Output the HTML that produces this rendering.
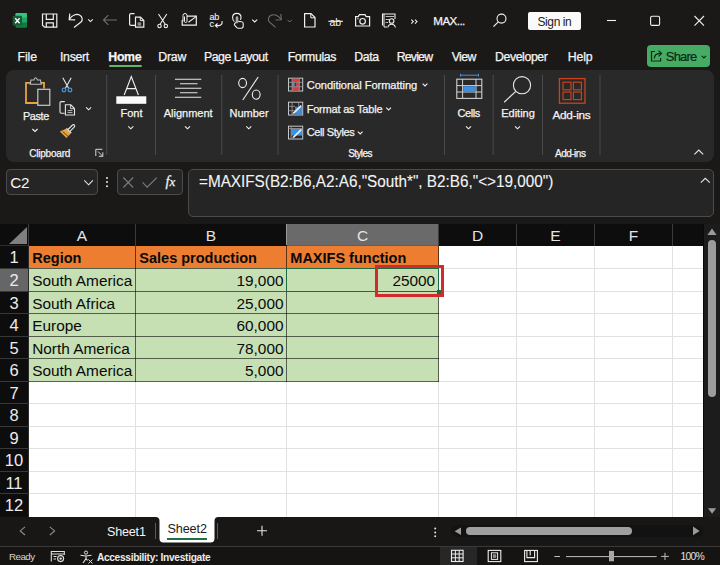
<!DOCTYPE html>
<html><head><meta charset="utf-8">
<style>
*{margin:0;padding:0;box-sizing:border-box}
html,body{width:720px;height:565px;overflow:hidden;background:#1b1917;font-family:"Liberation Sans",sans-serif}
#root{position:relative;width:720px;height:565px;overflow:hidden}
.a{position:absolute}
.t{position:absolute;white-space:nowrap;line-height:1}
svg{position:absolute;overflow:visible}
.w{color:#f4f4f4;-webkit-text-stroke:0.25px #f4f4f4}
</style></head><body><div id="root">
<!-- title -->
<!-- excel logo -->
<svg style="left:0;top:0" width="720" height="40">
 <g>
  <rect x="15.5" y="13" width="11.5" height="14.8" rx="1.2" fill="#107c41"/>
  <rect x="15.5" y="13" width="11.5" height="5" rx="1.2" fill="#33c481"/>
  <rect x="15.5" y="17.5" width="11.5" height="5" fill="#21a366"/>
  <rect x="12.7" y="15.8" width="9.3" height="9.7" rx="1" fill="#185c37"/>
  <path d="M15.2 18.2 L19.6 23.2 M19.6 18.2 L15.2 23.2" stroke="#fff" stroke-width="1.3"/>
 </g>
 <!-- save -->
 <path d="M42.5 14 H56.8 V27.2 H44.5 L42.5 25.2 Z" fill="none" stroke="#f0f0f0" stroke-width="1.2"/>
 <path d="M46.3 14 V19.3 H53.3 V14" fill="none" stroke="#f0f0f0" stroke-width="1.2"/>
 <path d="M46.3 27.2 V22.8 H53.3 V27.2" fill="none" stroke="#f0f0f0" stroke-width="1.2"/>
 <!-- undo -->
 <path d="M69.8 13.6 L69.2 19.6 L75.2 19.8" fill="none" stroke="#f0f0f0" stroke-width="1.2"/>
 <path d="M69.4 19.4 C72 15 76.5 13.5 79.5 15 C82.5 16.5 83 20 81 22 L74 27.4" fill="none" stroke="#f0f0f0" stroke-width="1.2"/>
 <path d="M88.2 19.4 L90.5 21.6 L92.8 19.4" fill="none" stroke="#f0f0f0" stroke-width="1.1"/>
 <!-- back arrow dim -->
 <path d="M103.5 20 H117 M108.3 15.2 L103.5 20 L108.3 24.8" fill="none" stroke="#6e6e6e" stroke-width="1.1"/>
 <!-- copy pages -->
 <path d="M134.5 13.6 H131 Q129.6 13.6 129.6 15 V24 Q129.6 25.4 131 25.4 H135" fill="none" stroke="#f0f0f0" stroke-width="1.2"/>
 <path d="M135.5 17.2 H140.5 L143.8 20.5 V27.2 H135.5 Z" fill="none" stroke="#f0f0f0" stroke-width="1.2"/>
 <path d="M140.3 17.2 V20.6 H143.8" fill="none" stroke="#f0f0f0" stroke-width="1"/>
 <rect x="137.6" y="22.3" width="3.6" height="3.4" fill="#8a8a8a"/>
 <!-- scissors -->
 <path d="M158.5 14 L165.2 24.2 M166.8 14 L160.1 24.2" fill="none" stroke="#f0f0f0" stroke-width="1.1"/>
 <circle cx="159.5" cy="26" r="1.7" fill="none" stroke="#f0f0f0" stroke-width="1.1"/>
 <circle cx="165.8" cy="26" r="1.7" fill="none" stroke="#f0f0f0" stroke-width="1.1"/>
 <!-- email attach -->
 <path d="M187 16.2 H196.3 V25.2 H182.2 V20" fill="none" stroke="#f0f0f0" stroke-width="1.2"/>
 <path d="M188.5 22.2 L196 16.6" fill="none" stroke="#f0f0f0" stroke-width="1.1"/>
 <path d="M183 21.5 V15.5 Q183 13.5 185 13.5 Q187 13.5 187 15.5 V21.3 Q187 22.5 185.5 22.5 Q184.5 22.5 184.5 21.3 V16.5" fill="none" stroke="#f0f0f0" stroke-width="1"/>
 <!-- spell abc -->
 <text x="209.6" y="20.4" font-family="Liberation Sans" font-size="9" fill="#f0f0f0" stroke="#f0f0f0" stroke-width="0.1" letter-spacing="-0.3">ab</text>
 <text x="209.6" y="27.2" font-family="Liberation Sans" font-size="9" fill="#f0f0f0" stroke="#f0f0f0" stroke-width="0.1">c</text>
 <path d="M222 21 Q222.8 25 219 25.6 H215.5 M217.5 23.5 L215.3 25.6 L217.5 27.6" fill="none" stroke="#f0f0f0" stroke-width="1.1"/>
 <!-- touch -->
 <path d="M234.4 21.6 Q232.6 20.2 232.6 17.5 Q232.6 13.4 236.8 13.4 Q241 13.4 241 17.5 Q241 18.8 240.3 19.8" fill="none" stroke="#f0f0f0" stroke-width="1.1"/>
 <rect x="235.7" y="16.2" width="2.6" height="7.2" rx="1.3" fill="#a8a8a8"/>
 <path d="M235.9 22.4 L234.6 23.6 Q234 24.4 234.8 25.3 L236.8 27.6 Q237.4 28.2 238.4 28.2 H241.2 Q243.2 28.2 243.2 26 V23.4 Q243.2 21.8 241.6 21.7 L238.3 21.4" fill="none" stroke="#f0f0f0" stroke-width="1.1"/>
 <path d="M252.2 19.6 L254.7 22 L257.2 19.6" fill="none" stroke="#f0f0f0" stroke-width="1.1"/>
 <!-- redo dim -->
 <path d="M280.8 14 L281.3 19.8 L275.5 20" fill="none" stroke="#707070" stroke-width="1.1"/>
 <path d="M281 19.6 C278.5 15.2 274 13.8 271 15.3 C268 16.8 267.7 20.2 269.6 22.2 L275.6 27.3" fill="none" stroke="#707070" stroke-width="1.1"/>
 <path d="M287.5 19.8 L289.7 22 L291.9 19.8" fill="none" stroke="#707070" stroke-width="1"/>
 <!-- new doc -->
 <path d="M304.6 13.6 H311 L315 17.6 V27 H304.6 Z" fill="none" stroke="#f0f0f0" stroke-width="1.2"/>
 <path d="M310.8 13.6 V17.8 H315" fill="none" stroke="#f0f0f0" stroke-width="1"/>
 <!-- ab strike -->
 <text x="329.6" y="25.6" font-family="Liberation Sans" font-size="10.5" fill="#f0f0f0" letter-spacing="-0.3">ab</text>
 <path d="M328.3 21.3 H343" stroke="#f0f0f0" stroke-width="1.1"/>
 <!-- camera -->
 <path d="M355.6 16.6 H358.2 L359.5 14.6 H365 L366.2 16.6 H369.6 V26 H355.6 Z" fill="none" stroke="#f0f0f0" stroke-width="1.2"/>
 <circle cx="362.6" cy="21.3" r="2.8" fill="none" stroke="#f0f0f0" stroke-width="1.2"/>
 <circle cx="358" cy="18.8" r="0.7" fill="#f0f0f0"/>
 <!-- form/access -->
 <path d="M382.5 25.5 V14 H395 V19" fill="none" stroke="#f0f0f0" stroke-width="1.1"/>
 <path d="M384 14 V27 H387" fill="none" stroke="#f0f0f0" stroke-width="1"/>
 <path d="M385.6 16.5 H394 M385.6 19.5 H389 M385.6 22.5 H388" stroke="#bdbdbd" stroke-width="1"/>
 <circle cx="391.6" cy="21" r="2.3" fill="none" stroke="#f0f0f0" stroke-width="1.1"/>
 <path d="M387.8 27.5 Q388.5 24.2 391.6 24.2 Q394.7 24.2 395.4 27.5" fill="none" stroke="#f0f0f0" stroke-width="1.1"/>
 <!-- >> -->
 <path d="M411.3 19.6 L413.3 21.6 L411.3 23.6 M415 19.6 L417 21.6 L415 23.6" fill="none" stroke="#f0f0f0" stroke-width="1.1"/>
 <!-- search -->
 <circle cx="501.5" cy="18.6" r="4.5" fill="none" stroke="#f0f0f0" stroke-width="1.1"/>
 <path d="M498.3 21.8 L493.5 26.6" stroke="#f0f0f0" stroke-width="1.2"/>
 <!-- window controls -->
 <path d="M607 20.5 H616" stroke="#f0f0f0" stroke-width="1.1"/>
 <rect x="650.6" y="16.2" width="9" height="9.2" rx="1.5" fill="none" stroke="#f0f0f0" stroke-width="1.1"/>
 <path d="M694.5 16 L704 25.6 M704 16 L694.5 25.6" stroke="#f0f0f0" stroke-width="1.1"/>
</svg>
<div class="t w" style="left:433.3px;top:15.3px;font-size:11.6px;letter-spacing:-0.55px">MAX...</div>
<div class="a" style="left:528px;top:11.5px;width:52.5px;height:18.5px;background:#fafafa;border-radius:2px"></div>
<div class="t" style="left:537.5px;top:15.5px;font-size:12px;color:#1a1a1a;letter-spacing:-0.4px">Sign in</div>
<!-- share button -->
<div class="a" style="left:646.9px;top:45px;width:63.3px;height:21.9px;background:#46ac63;border-radius:4px"></div>
<svg style="left:0;top:0" width="720" height="70">
 <path d="M655 51.5 H651.5 V61 H660.6 V58" fill="none" stroke="#0c2a15" stroke-width="1.2"/>
 <path d="M654.3 58.4 Q654.5 53.6 659.6 53.6 H661" fill="none" stroke="#0c2a15" stroke-width="1.2"/>
 <path d="M658.6 50.8 L661.5 53.6 L658.6 56.4" fill="none" stroke="#0c2a15" stroke-width="1.2"/>
 <path d="M701.8 55.8 L703.9 57.9 L706 55.8" fill="none" stroke="#0c2a15" stroke-width="1.1"/>
</svg>
<div class="t" style="left:665.8px;top:50.3px;font-size:13px;letter-spacing:-0.8px;color:#0c2a15;-webkit-text-stroke:0.2px #0c2a15">Share</div>
<!-- tabs -->
<div class="t w" style="left:17.5px;top:51.3px;font-size:12.3px;letter-spacing:-0.1px">File</div>
<div class="t w" style="left:60px;top:51.3px;font-size:12.3px;letter-spacing:-0.3px">Insert</div>
<div class="t w" style="left:108.3px;top:51.3px;font-size:12.3px;font-weight:bold;letter-spacing:-0.3px">Home</div>
<div class="a" style="left:108.5px;top:64.6px;width:33.5px;height:2.4px;background:#5fb56a;border-radius:1px"></div>
<div class="t w" style="left:158.3px;top:51.3px;font-size:12.3px;letter-spacing:-0.2px">Draw</div>
<div class="t w" style="left:204px;top:51.3px;font-size:12.3px;letter-spacing:-0.5px">Page Layout</div>
<div class="t w" style="left:287.7px;top:51.3px;font-size:12.3px;letter-spacing:-0.35px">Formulas</div>
<div class="t w" style="left:354.3px;top:51.3px;font-size:12.3px;letter-spacing:-0.4px">Data</div>
<div class="t w" style="left:396.7px;top:51.3px;font-size:12.3px;letter-spacing:-0.8px">Review</div>
<div class="t w" style="left:451.7px;top:51.3px;font-size:12.3px;letter-spacing:-0.6px">View</div>
<div class="t w" style="left:495px;top:51.3px;font-size:12.3px;letter-spacing:-0.4px">Developer</div>
<div class="t w" style="left:567.7px;top:51.3px;font-size:12.3px;letter-spacing:-0.1px">Help</div>
<!-- ribbon -->
<div class="a" style="left:6px;top:70px;width:707.8px;height:91.5px;background:#292929;border-radius:8px"></div>
<svg style="left:0;top:0" width="720" height="170">
 <!-- separators -->
 <path d="M106.7 75 V155 M155.5 75 V155 M221.8 75 V155 M278 75 V155 M444.5 75 V155 M493.2 75 V155 M542.5 75 V155 M600 75 V155" stroke="#4a4a4a" stroke-width="1"/>
 <!-- paste -->
 <path d="M31 82.8 H26 V103 H38" fill="none" stroke="#e8a33d" stroke-width="1.8"/>
 <path d="M40.5 82.8 H44 V88.5" fill="none" stroke="#e8a33d" stroke-width="1.8"/>
 <path d="M30.2 84.3 L31 80 H34 Q34.5 77.8 35.7 77.8 Q36.9 77.8 37.4 80 H40.4 L41.2 84.3 Z" fill="#292929" stroke="#bdbdbd" stroke-width="1.1"/>
 <rect x="37.8" y="89.3" width="12" height="16" fill="#2b2b2b" stroke="#c8c8c8" stroke-width="1.2"/>
 <path d="M32.4 129 L35 131.4 L37.6 129" fill="none" stroke="#f0f0f0" stroke-width="1.2"/>
 <!-- cut (blue) -->
 <path d="M62.8 77.8 L68.6 88.2 M71.2 77.8 L65.4 88.2" stroke="#e6e6e6" stroke-width="1.1"/>
 <circle cx="64" cy="90" r="1.8" fill="none" stroke="#4a90d9" stroke-width="1.3"/>
 <circle cx="70" cy="90" r="1.8" fill="none" stroke="#4a90d9" stroke-width="1.3"/>
 <!-- copy -->
 <path d="M64.8 101.6 H61.2 Q60 101.6 60 102.8 V112 Q60 113.2 61.2 113.2 H64.6" fill="none" stroke="#e6e6e6" stroke-width="1.1"/>
 <path d="M65.4 104.8 H70.8 L74.5 108.5 V115 H65.4 Z" fill="none" stroke="#e6e6e6" stroke-width="1.1"/>
 <path d="M70.6 104.8 V108.7 H74.5" fill="none" stroke="#e6e6e6" stroke-width="0.9"/>
 <path d="M67.6 110.6 H72.4 M67.6 112.6 H72.4" stroke="#e6e6e6" stroke-width="0.8"/>
 <path d="M86.1 107.4 L88.6 109.8 L91.1 107.4" fill="none" stroke="#f0f0f0" stroke-width="1.1"/>
 <!-- format painter -->
 <path d="M68 129.5 L72.5 125 Q73.6 124.2 74.4 125 Q75.2 125.9 74.4 126.9 L70 131.4" fill="none" stroke="#e6e6e6" stroke-width="1.1"/>
 <path d="M66.5 128.4 L71.2 133 L66.5 138 L59.8 131.6 Z" fill="#e8a33d"/>
 <path d="M62.6 131.4 L68.2 136.6" stroke="#292929" stroke-width="0.8"/>
 <path d="M66.5 128.4 L71.2 133" stroke="#e6e6e6" stroke-width="1.1"/>
 <!-- dialog launcher -->
 <path d="M95.8 156 V149.3 H102.4 M98 151.5 L102.8 156.3 M98.8 156.3 H102.8 V152.3" fill="none" stroke="#d8d8d8" stroke-width="1"/>
 <!-- font A -->
 <path d="M124.2 95 L131.3 76.6 L138.4 95 M126.8 88.6 H135.8" fill="none" stroke="#f0f0f0" stroke-width="1.1"/>
 <rect x="116.3" y="96.3" width="30" height="7.5" fill="#fafafa"/>
 <path d="M128.3 126.4 L130.8 128.8 L133.3 126.4" fill="none" stroke="#f0f0f0" stroke-width="1.1"/>
 <!-- alignment -->
 <path d="M175 79.3 H201.3 M180 83.8 H197.5 M175 88.3 H201.3 M180 92.8 H197.5 M175 97.3 H201.3" stroke="#e6e6e6" stroke-width="1.1"/>
 <path d="M185 126.4 L187.5 128.8 L190 126.4" fill="none" stroke="#f0f0f0" stroke-width="1.1"/>
 <!-- number % -->
 <ellipse cx="242.6" cy="83" rx="3.9" ry="4.6" fill="none" stroke="#f0f0f0" stroke-width="1.1"/>
 <ellipse cx="256.2" cy="94.6" rx="3.9" ry="4.6" fill="none" stroke="#f0f0f0" stroke-width="1.1"/>
 <path d="M258.2 77 L242.8 100" stroke="#f0f0f0" stroke-width="1.1"/>
 <path d="M246.3 126.4 L248.8 128.8 L251.3 126.4" fill="none" stroke="#f0f0f0" stroke-width="1.1"/>
 <!-- CF icon -->
 <g transform="translate(288.5,78.2)">
  <rect x="0" y="0" width="14.2" height="12.8" fill="#262626" stroke="#c8c8c8" stroke-width="1"/>
  <rect x="3.6" y="0.5" width="7.2" height="3.4" fill="#e23a3a"/>
  <rect x="3.6" y="4.4" width="2.6" height="3.8" fill="#4a90d9"/>
  <rect x="7.2" y="4.4" width="3.6" height="3.8" fill="#e23a3a"/>
  <rect x="3.6" y="8.7" width="7.2" height="3.6" fill="#e23a3a"/>
  <path d="M3.6 0 V12.8 M10.8 0 V12.8 M0 4.1 H14.2 M0 8.5 H14.2" stroke="#a0a0a0" stroke-width="0.8"/>
 </g>
 <path d="M422.6 83.6 L425 86 L427.4 83.6" fill="none" stroke="#f0f0f0" stroke-width="1.1"/>
 <!-- FaT icon -->
 <g transform="translate(288.5,102.2)">
  <rect x="0" y="0" width="14.2" height="12.8" fill="#262626" stroke="#c8c8c8" stroke-width="1"/>
  <rect x="6.6" y="4.6" width="7.1" height="7.7" fill="#3d8fe0"/>
  <path d="M3.6 0 V12.8 M10.2 0 V4.6 M0 4.1 H6.6 M0 8.5 H6.6" stroke="#a0a0a0" stroke-width="0.8"/>
  <path d="M4.6 11.4 L12.8 3.4" stroke="#f0f0f0" stroke-width="1.6"/>
  <path d="M2.2 12.6 Q3.2 10.2 5.2 10.8 Q5 12.4 2.2 12.6 Z" fill="#4a90d9"/>
 </g>
 <path d="M386.2 107.6 L388.6 110 L391 107.6" fill="none" stroke="#f0f0f0" stroke-width="1.1"/>
 <!-- CS icon -->
 <g transform="translate(288.5,126.2)">
  <rect x="0" y="0" width="14.2" height="12.8" fill="#262626" stroke="#c8c8c8" stroke-width="1"/>
  <rect x="2.6" y="2.4" width="11.1" height="7" fill="#3d8fe0"/>
  <path d="M0 2.4 H14.2 M2.6 0 V12.8" stroke="#a0a0a0" stroke-width="0.8"/>
  <path d="M4.6 11.4 L12.8 3.4" stroke="#f0f0f0" stroke-width="1.6"/>
  <path d="M2.2 12.6 Q3.2 10.2 5.2 10.8 Q5 12.4 2.2 12.6 Z" fill="#4a90d9"/>
 </g>
 <path d="M357.8 131.6 L360.2 134 L362.6 131.6" fill="none" stroke="#f0f0f0" stroke-width="1.1"/>
 <!-- cells icon -->
 <path d="M460.5 75.2 H478.5 M460.5 73.8 V76.6 M478.5 73.8 V76.6" stroke="#4a90d9" stroke-width="1"/>
 <rect x="456.8" y="79.2" width="25" height="19.2" fill="none" stroke="#d0d0d0" stroke-width="1.1"/>
 <path d="M456.8 85.6 H481.8 M456.8 92 H481.8 M462.6 79.2 V98.4 M476 79.2 V98.4" stroke="#d0d0d0" stroke-width="1"/>
 <rect x="463.2" y="86.2" width="12.2" height="5.2" fill="#3d8fe0"/>
 <path d="M466 126.4 L468.5 128.8 L471 126.4" fill="none" stroke="#f0f0f0" stroke-width="1.1"/>
 <!-- editing search -->
 <circle cx="522" cy="85.2" r="8.6" fill="none" stroke="#e6e6e6" stroke-width="1.1"/>
 <path d="M515.8 91.4 L504.2 102.2" stroke="#e6e6e6" stroke-width="1.2"/>
 <path d="M515 126.4 L517.5 128.8 L520 126.4" fill="none" stroke="#f0f0f0" stroke-width="1.1"/>
 <!-- add-ins -->
 <rect x="559.4" y="78.6" width="25.6" height="24.6" fill="none" stroke="#c9421c" stroke-width="1.3"/>
 <rect x="563" y="82.2" width="8" height="7.6" fill="none" stroke="#c9421c" stroke-width="1.2"/>
 <rect x="573.4" y="82.2" width="8" height="7.6" fill="none" stroke="#c9421c" stroke-width="1.2"/>
 <rect x="563" y="92" width="8" height="7.6" fill="none" stroke="#c9421c" stroke-width="1.2"/>
 <rect x="573.4" y="92" width="8" height="7.6" fill="none" stroke="#c9421c" stroke-width="1.2"/>
 <!-- collapse -->
 <path d="M694.4 154.4 L698.8 150 L703.2 154.4" fill="none" stroke="#e6e6e6" stroke-width="1.1"/>
</svg>
<div class="t w" style="left:23px;top:110.6px;font-size:10.8px;letter-spacing:-0.35px">Paste</div>
<div class="t w" style="left:29.2px;top:148.5px;font-size:10px;letter-spacing:-0.2px">Clipboard</div>
<div class="t w" style="left:120.5px;top:108px;font-size:11px">Font</div>
<div class="t w" style="left:163.7px;top:108px;font-size:11px">Alignment</div>
<div class="t w" style="left:229.5px;top:108px;font-size:11px">Number</div>
<div class="t w" style="left:306.7px;top:80px;font-size:11.1px;letter-spacing:-0.05px">Conditional Formatting</div>
<div class="t w" style="left:306.7px;top:103.8px;font-size:11px;letter-spacing:-0.2px">Format as Table</div>
<div class="t w" style="left:306.7px;top:127.3px;font-size:11px;letter-spacing:-0.4px">Cell Styles</div>
<div class="t w" style="left:348.2px;top:148.5px;font-size:10px;letter-spacing:-0.6px">Styles</div>
<div class="t w" style="left:457.5px;top:108px;font-size:11px;letter-spacing:-0.45px">Cells</div>
<div class="t w" style="left:501.2px;top:108px;font-size:11px">Editing</div>
<div class="t w" style="left:552.5px;top:109.6px;font-size:11.8px;letter-spacing:-0.3px">Add-ins</div>
<div class="t w" style="left:555px;top:148.5px;font-size:10px;letter-spacing:-0.5px">Add-ins</div>
<!-- formula -->
<div class="a" style="left:5.7px;top:169px;width:92.3px;height:25.8px;background:#252525;border:1px solid #4b4b4b;border-radius:4px"></div>
<div class="t w" style="left:10.3px;top:175.3px;font-size:15.3px;letter-spacing:-0.3px;-webkit-text-stroke:0">C2</div>
<div class="a" style="left:116.7px;top:169px;width:66.6px;height:25.6px;background:#252525;border:1px solid #4b4b4b;border-radius:4px"></div>
<div class="a" style="left:187.5px;top:169px;width:526px;height:48.4px;background:#252525;border:1px solid #4b4b4b;border-radius:5px"></div>
<svg style="left:0;top:0" width="720" height="220">
 <path d="M84.3 180.4 L88.6 184.8 L92.9 180.4" fill="none" stroke="#e6e6e6" stroke-width="1.1"/>
 <circle cx="107" cy="178" r="1" fill="#e6e6e6"/><circle cx="107" cy="182.1" r="1" fill="#e6e6e6"/><circle cx="107" cy="186.2" r="1" fill="#e6e6e6"/>
 <path d="M123.3 177.5 L133.2 187.5 M133.2 177.5 L123.3 187.5" stroke="#7c7c7c" stroke-width="1.1"/>
 <path d="M142.6 182.3 L147.2 187.2 L156.8 177.6" fill="none" stroke="#7c7c7c" stroke-width="1.1"/>
 <path d="M700.8 182.6 L705.3 178.3 L709.8 182.6" fill="none" stroke="#e6e6e6" stroke-width="1.1"/>
</svg>
<div class="t w" style="left:165.5px;top:174px;font-size:14.5px;font-family:'Liberation Serif',serif;font-style:italic">f<span style="font-size:13px">x</span></div>
<div class="t w" style="-webkit-text-stroke:0.1px #f4f4f4;left:199.3px;top:174.2px;font-size:16px;transform:scaleX(0.955);transform-origin:0 0">=MAXIFS(B2:B6,A2:A6,"South*", B2:B6,"&lt;&gt;19,000")</div>
<!-- grid -->
<div class="a" style="left:0;top:224px;width:702.5px;height:22px;background:#0d0d0d"></div>
<div class="a" style="left:287px;top:224px;width:151px;height:22px;background:#6a6a6a"></div>
<div class="a" style="left:287px;top:245px;width:151px;height:1px;background:#2f7a4c"></div>
<div class="a" style="left:286px;top:224px;width:1px;height:21px;background:#9a9a9a"></div>
<div class="a" style="left:0;top:245px;width:28px;height:1px;background:#2c2c2c"></div>
<svg style="left:0;top:224px" width="28" height="22"><polygon points="9,20 27,3 27,20" fill="#7f7f7f"/></svg>
<div class="a" style="left:28px;top:224px;width:1px;height:22px;background:#3c3c3c"></div>
<div class="a" style="left:135px;top:224px;width:1px;height:22px;background:#3c3c3c"></div>
<div class="a" style="left:438px;top:224px;width:1px;height:22px;background:#3c3c3c"></div>
<div class="a" style="left:516px;top:224px;width:1px;height:22px;background:#3c3c3c"></div>
<div class="a" style="left:594px;top:224px;width:1px;height:22px;background:#3c3c3c"></div>
<div class="a" style="left:672px;top:224px;width:1px;height:22px;background:#3c3c3c"></div>
<div class="t" style="left:29px;width:106px;text-align:center;top:227.8px;font-size:15.5px;color:#e4e4e4">A</div>
<div class="t" style="left:136px;width:150px;text-align:center;top:227.8px;font-size:15.5px;color:#e4e4e4">B</div>
<div class="t" style="left:287px;width:151px;text-align:center;top:227.8px;font-size:15.5px;color:#e4e4e4">C</div>
<div class="t" style="left:439px;width:77px;text-align:center;top:227.8px;font-size:15.5px;color:#e4e4e4">D</div>
<div class="t" style="left:517px;width:77px;text-align:center;top:227.8px;font-size:15.5px;color:#e4e4e4">E</div>
<div class="t" style="left:595px;width:77px;text-align:center;top:227.8px;font-size:15.5px;color:#e4e4e4">F</div>
<div class="a" style="left:29px;top:246px;width:673.5px;height:270.8px;background:#ffffff"></div>
<div class="a" style="left:0;top:246px;width:29px;height:270.8px;background:#0d0d0d"></div>
<div class="a" style="left:0;top:269px;width:28px;height:22px;background:#666666"></div>
<div class="a" style="left:0;top:268px;width:28px;height:1px;background:#383838"></div>
<div class="a" style="left:0;top:291px;width:28px;height:1px;background:#383838"></div>
<div class="a" style="left:0;top:313px;width:28px;height:1px;background:#383838"></div>
<div class="a" style="left:0;top:336px;width:28px;height:1px;background:#383838"></div>
<div class="a" style="left:0;top:358px;width:28px;height:1px;background:#383838"></div>
<div class="a" style="left:0;top:381px;width:28px;height:1px;background:#383838"></div>
<div class="a" style="left:0;top:403px;width:28px;height:1px;background:#383838"></div>
<div class="a" style="left:0;top:426px;width:28px;height:1px;background:#383838"></div>
<div class="a" style="left:0;top:448px;width:28px;height:1px;background:#383838"></div>
<div class="a" style="left:0;top:471px;width:28px;height:1px;background:#383838"></div>
<div class="a" style="left:0;top:493px;width:28px;height:1px;background:#383838"></div>
<div class="a" style="left:28px;top:246px;width:1px;height:270.8px;background:#2a2a2a"></div>
<div class="t" style="left:0;width:28px;text-align:center;top:249.0px;font-size:16.5px;color:#ececec">1</div>
<div class="t" style="left:0;width:28px;text-align:center;top:272.0px;font-size:16.5px;color:#ececec">2</div>
<div class="t" style="left:0;width:28px;text-align:center;top:295.0px;font-size:16.5px;color:#ececec">3</div>
<div class="t" style="left:0;width:28px;text-align:center;top:317.0px;font-size:16.5px;color:#ececec">4</div>
<div class="t" style="left:0;width:28px;text-align:center;top:340.0px;font-size:16.5px;color:#ececec">5</div>
<div class="t" style="left:0;width:28px;text-align:center;top:362.0px;font-size:16.5px;color:#ececec">6</div>
<div class="t" style="left:0;width:28px;text-align:center;top:385.0px;font-size:16.5px;color:#ececec">7</div>
<div class="t" style="left:0;width:28px;text-align:center;top:407.0px;font-size:16.5px;color:#ececec">8</div>
<div class="t" style="left:0;width:28px;text-align:center;top:430.0px;font-size:16.5px;color:#ececec">9</div>
<div class="t" style="left:0;width:28px;text-align:center;top:452.0px;font-size:16.5px;color:#ececec">10</div>
<div class="t" style="left:0;width:28px;text-align:center;top:475.0px;font-size:16.5px;color:#ececec">11</div>
<div class="t" style="left:0;width:28px;text-align:center;top:497.0px;font-size:16.5px;color:#ececec">12</div>
<div class="a" style="left:29px;top:268px;width:673.5px;height:1px;background:#e1e1e1"></div>
<div class="a" style="left:29px;top:291px;width:673.5px;height:1px;background:#e1e1e1"></div>
<div class="a" style="left:29px;top:313px;width:673.5px;height:1px;background:#e1e1e1"></div>
<div class="a" style="left:29px;top:336px;width:673.5px;height:1px;background:#e1e1e1"></div>
<div class="a" style="left:29px;top:358px;width:673.5px;height:1px;background:#e1e1e1"></div>
<div class="a" style="left:29px;top:381px;width:673.5px;height:1px;background:#e1e1e1"></div>
<div class="a" style="left:29px;top:403px;width:673.5px;height:1px;background:#e1e1e1"></div>
<div class="a" style="left:29px;top:426px;width:673.5px;height:1px;background:#e1e1e1"></div>
<div class="a" style="left:29px;top:448px;width:673.5px;height:1px;background:#e1e1e1"></div>
<div class="a" style="left:29px;top:471px;width:673.5px;height:1px;background:#e1e1e1"></div>
<div class="a" style="left:29px;top:493px;width:673.5px;height:1px;background:#e1e1e1"></div>
<div class="a" style="left:135px;top:246px;width:1px;height:270.8px;background:#e1e1e1"></div>
<div class="a" style="left:286px;top:246px;width:1px;height:270.8px;background:#e1e1e1"></div>
<div class="a" style="left:438px;top:246px;width:1px;height:270.8px;background:#e1e1e1"></div>
<div class="a" style="left:516px;top:246px;width:1px;height:270.8px;background:#e1e1e1"></div>
<div class="a" style="left:594px;top:246px;width:1px;height:270.8px;background:#e1e1e1"></div>
<div class="a" style="left:672px;top:246px;width:1px;height:270.8px;background:#e1e1e1"></div>
<div class="a" style="left:29px;top:246px;width:410px;height:22px;background:#ed7d31"></div>
<div class="a" style="left:29px;top:268px;width:410px;height:113px;background:#c6e0b4"></div>
<div class="a" style="left:29px;top:268px;width:410px;height:1px;background:rgba(0,0,0,0.58)"></div>
<div class="a" style="left:29px;top:291px;width:410px;height:1px;background:rgba(0,0,0,0.58)"></div>
<div class="a" style="left:29px;top:313px;width:410px;height:1px;background:rgba(0,0,0,0.58)"></div>
<div class="a" style="left:29px;top:336px;width:410px;height:1px;background:rgba(0,0,0,0.58)"></div>
<div class="a" style="left:29px;top:358px;width:410px;height:1px;background:rgba(0,0,0,0.58)"></div>
<div class="a" style="left:29px;top:381px;width:410px;height:1px;background:rgba(0,0,0,0.58)"></div>
<div class="a" style="left:135px;top:246px;width:1px;height:136px;background:rgba(0,0,0,0.58)"></div>
<div class="a" style="left:286px;top:246px;width:1px;height:136px;background:rgba(0,0,0,0.58)"></div>
<div class="a" style="left:438px;top:246px;width:1px;height:136px;background:rgba(0,0,0,0.58)"></div>
<div class="t" style="left:32.3px;top:250.52px;font-size:14.5px;font-weight:bold;color:#0a0a0a">Region</div>
<div class="t" style="left:139.3px;top:250.52px;font-size:14.5px;font-weight:bold;color:#0a0a0a">Sales production</div>
<div class="t" style="left:290.3px;top:250.52px;font-size:14.5px;font-weight:bold;color:#0a0a0a">MAXIFS function</div>
<div class="t" style="left:32.2px;top:272.56px;font-size:15.4px;color:#0a0a0a">South America</div>
<div class="t" style="left:135px;width:148.5px;text-align:right;top:272.56px;font-size:15.4px;color:#0a0a0a">19,000</div>
<div class="t" style="left:32.2px;top:295.56px;font-size:15.4px;color:#0a0a0a">South Africa</div>
<div class="t" style="left:135px;width:148.5px;text-align:right;top:295.56px;font-size:15.4px;color:#0a0a0a">25,000</div>
<div class="t" style="left:32.2px;top:317.56px;font-size:15.4px;color:#0a0a0a">Europe</div>
<div class="t" style="left:135px;width:148.5px;text-align:right;top:317.56px;font-size:15.4px;color:#0a0a0a">60,000</div>
<div class="t" style="left:32.2px;top:340.56px;font-size:15.4px;color:#0a0a0a">North America</div>
<div class="t" style="left:135px;width:148.5px;text-align:right;top:340.56px;font-size:15.4px;color:#0a0a0a">78,000</div>
<div class="t" style="left:32.2px;top:362.56px;font-size:15.4px;color:#0a0a0a">South America</div>
<div class="t" style="left:135px;width:148.5px;text-align:right;top:362.56px;font-size:15.4px;color:#0a0a0a">5,000</div>
<div class="t" style="left:286px;width:149.2px;text-align:right;top:272.56px;font-size:15.4px;color:#0a0a0a">25000</div>
<div class="a" style="left:286px;top:268px;width:153px;height:24px;border:1px solid #1e6b41"></div>
<div class="a" style="left:437px;top:290px;width:4px;height:4px;background:#1e6b41"></div>
<div class="a" style="left:375px;top:265px;width:69px;height:32px;border:3px solid #d22b2b"></div>
<!-- bottom -->
<!-- vertical scrollbar -->
<div class="a" style="left:702.5px;top:224px;width:17.5px;height:293px;background:#1c1c1c;border-left:1px solid #0a0a0a"></div>
<div class="a" style="left:708px;top:239.8px;width:8.3px;height:157.6px;background:#9c9c9c;border-radius:4.2px"></div>
<!-- tab bar -->
<div class="a" style="left:0;top:517px;width:720px;height:28.5px;background:#181716"></div>
<div class="a" style="left:451px;top:524.6px;width:252px;height:12.7px;background:#121212;border-radius:6px"></div>
<div class="a" style="left:465.7px;top:527.2px;width:166.5px;height:7.8px;background:#a0a0a0;border-radius:4px"></div>
<!-- sheet2 tab -->
<svg style="left:0;top:0" width="720" height="565">
 <path d="M155.5 517 Q159.5 517 159.5 521 V538.5 Q159.5 542.5 163.5 542.5 H210.5 Q214.5 542.5 214.5 538.5 V521 Q214.5 517 218.5 517 Z" fill="#ffffff"/>
 <path d="M167 539 H207" stroke="#1e7145" stroke-width="2"/>
 <path d="M155.5 523 V539 M217.5 523 V539" stroke="#5a5a5a" stroke-width="1"/>
 <path d="M25 526.8 L20.2 530.9 L25 535 M49.8 526.8 L54.6 530.9 L49.8 535" fill="none" stroke="#8c8c8c" stroke-width="1.1"/>
 <path d="M262 525.8 V535.8 M257 530.8 H267" stroke="#e6e6e6" stroke-width="1.1"/>
 <circle cx="435.2" cy="528.5" r="1" fill="#e0e0e0"/><circle cx="435.2" cy="532.4" r="1" fill="#e0e0e0"/><circle cx="435.2" cy="536.3" r="1" fill="#e0e0e0"/>
 <path d="M461 527.6 V535 L454.6 531.3 Z" fill="#9a9a9a"/>
 <path d="M693 526.4 V535.3 L699.6 530.9 Z" fill="#9a9a9a"/>
 <path d="M707.4 234.9 L712 228.5 L716.6 234.9 Z" fill="#9a9a9a"/>
 <path d="M708 508.3 L712.1 513.8 L716.2 508.3 Z" fill="#9a9a9a"/>
</svg>
<div class="t w" style="left:107px;top:526.2px;font-size:12.6px;letter-spacing:-0.2px;-webkit-text-stroke:0">Sheet1</div>
<div class="t" style="left:167.5px;top:523.2px;font-size:12.6px;letter-spacing:-0.1px;color:#1a1a1a">Sheet2</div>
<!-- status bar -->
<div class="a" style="left:0;top:545.5px;width:720px;height:19.5px;background:#151413;border-top:1px solid #3a3a3a"></div>
<div class="a" style="left:439.5px;top:546.5px;width:37px;height:18.5px;background:#272727"></div>
<svg style="left:0;top:0" width="720" height="565">
 <!-- macro -->
 <path d="M51.3 561.5 V551.5 H64.3 V555" fill="none" stroke="#e0e0e0" stroke-width="1.1"/>
 <path d="M51.3 554 H64.3 M53.5 556.5 H56.5 M53.5 559 H56" stroke="#e0e0e0" stroke-width="1"/>
 <circle cx="60.6" cy="558.6" r="3" fill="none" stroke="#e0e0e0" stroke-width="1.1"/>
 <circle cx="60.6" cy="558.6" r="1.2" fill="#e0e0e0"/>
 <!-- accessibility -->
 <circle cx="86" cy="552.6" r="1.6" fill="none" stroke="#e0e0e0" stroke-width="1"/>
 <path d="M80.5 555.2 L86 556 L91.5 555.2 M86 556 V558.5 L83 563 M86 558.5 L87.5 560.5" fill="none" stroke="#e0e0e0" stroke-width="1.1"/>
 <path d="M88.5 559.5 L92.5 563.5 M92.5 559.5 L88.5 563.5" stroke="#e0e0e0" stroke-width="1"/>
 <!-- normal view grid -->
 <rect x="451.5" y="550.3" width="11.6" height="11.2" fill="none" stroke="#ececec" stroke-width="1.1"/>
 <path d="M455.4 550.3 V561.5 M459.2 550.3 V561.5 M451.5 554 H463.1 M451.5 557.8 H463.1" stroke="#ececec" stroke-width="1"/>
 <!-- page layout -->
 <rect x="488.2" y="550.4" width="12.6" height="11.2" fill="none" stroke="#ececec" stroke-width="1.1"/>
 <rect x="491.4" y="552.8" width="6.2" height="6.6" fill="none" stroke="#ececec" stroke-width="1"/>
 <rect x="492.8" y="554.3" width="3.4" height="3.6" fill="#8a8a8a"/>
 <!-- page break -->
 <rect x="524.6" y="550.4" width="12.8" height="11.2" fill="none" stroke="#ececec" stroke-width="1.1"/>
 <path d="M526.9 550.4 V557.6 H534.6 V550.4 M530.2 550.4 V555.6" fill="none" stroke="#ececec" stroke-width="1.1"/>
 <!-- zoom -->
 <path d="M554.3 556.5 H560" stroke="#bdbdbd" stroke-width="1"/>
 <path d="M566 556.6 H656.7" stroke="#bdbdbd" stroke-width="1"/>
 <rect x="609" y="550.9" width="5" height="10.4" fill="#a8a8a8"/>
 <path d="M661.1 556.4 H668.9 M665 552.8 V560" stroke="#bdbdbd" stroke-width="1"/>
</svg>
<div class="t" style="left:8.9px;top:552.4px;font-size:9.8px;letter-spacing:-0.5px;color:#d6d6d6">Ready</div>
<div class="t" style="left:96.9px;top:552.6px;font-size:10.2px;font-weight:bold;letter-spacing:-0.32px;color:#ececec">Accessibility: Investigate</div>
<div class="t" style="left:680.4px;top:552.3px;font-size:10.4px;letter-spacing:-0.75px;color:#e0e0e0">100%</div>
</div></body></html>
